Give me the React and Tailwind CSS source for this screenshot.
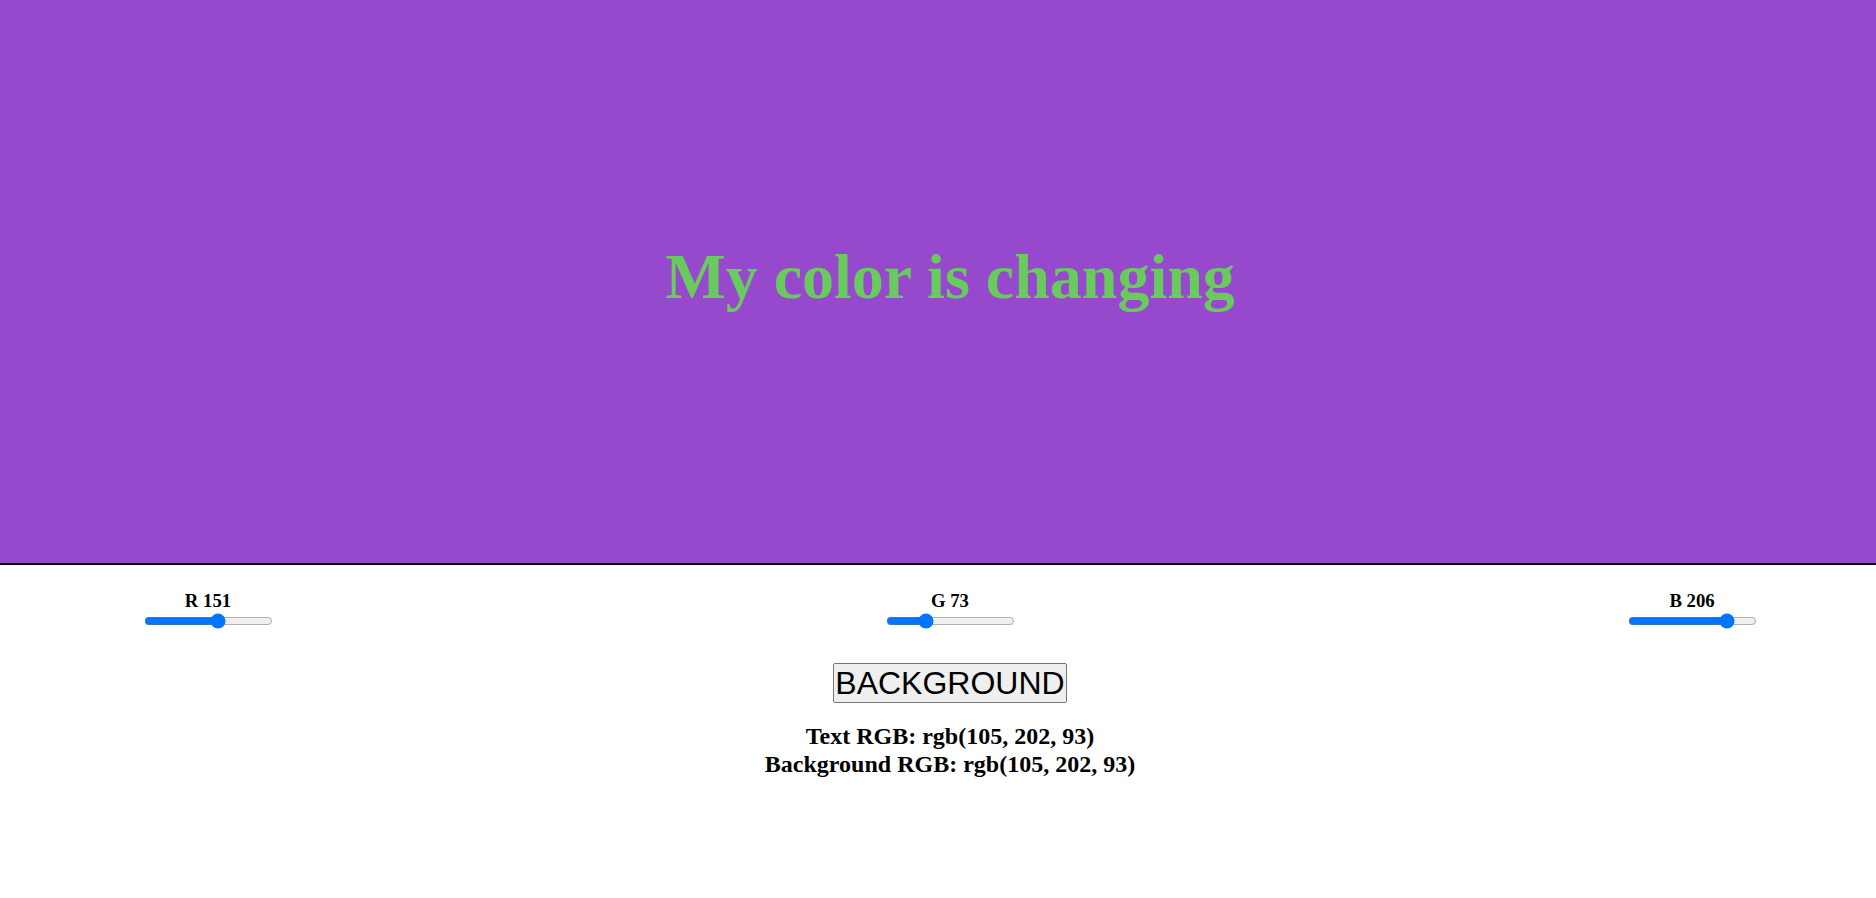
import { useState } from "react";

export default function App() {
  const [rgb, setRgb] = useState({ r: 151, g: 73, b: 206 });
  const [text] = useState("rgb(105, 202, 93)");

  const update = (key) => (e) => setRgb({ ...rgb, [key]: Number(e.target.value) });

  const sliders = [
    { key: "r", label: "R" },
    { key: "g", label: "G" },
    { key: "b", label: "B" },
  ];

  return (
    <div className="min-h-screen bg-white font-['Liberation_Serif',serif] text-black">
      <div
        className="h-[565px] border-b-2 border-black flex items-center justify-center pl-[24px] pb-[9px]"
        style={{ backgroundColor: `rgb(${rgb.r}, ${rgb.g}, ${rgb.b})` }}
      >
        <h1 className="text-[64px] font-bold leading-[1.149] text-[#69ca5d]">My color is changing</h1>
      </div>

      <div className="flex justify-between pl-[24px] pt-[25px]">
        {sliders.map((s) => (
          <div key={s.key} className="w-[368px] flex flex-col items-center">
            <h3 className="text-[18.72px] font-bold leading-[1.149]">
              {s.label} {rgb[s.key]}
            </h3>
            <input
              type="range"
              min="0"
              max="255"
              value={rgb[s.key]}
              onChange={update(s.key)}
              className="mx-[2px] mt-[1px] mb-[2px] w-[129px] h-[16px]"
            />
          </div>
        ))}
      </div>

      <div className="flex flex-col items-center pl-[24px] pt-[32px]">
        <button className="font-['Liberation_Sans',Arial,sans-serif] text-[32px] leading-[1.149] px-px py-px bg-[#efefef] border border-[#767676] rounded-[2px] text-black">
          BACKGROUND
        </button>
        <div className="mt-[20px] text-[24px] font-bold leading-[1.149] text-center">
          <div>Text RGB: {text}</div>
          <div>Background RGB: {text}</div>
        </div>
      </div>
    </div>
  );
}
